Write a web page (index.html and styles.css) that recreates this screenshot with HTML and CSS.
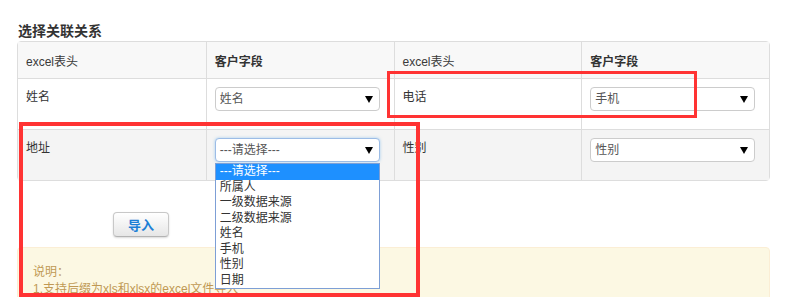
FILE: index.html
```html
<!DOCTYPE html>
<html lang="zh-CN">
<head>
  <meta charset="UTF-8">
  <title>选择关联关系</title>
  <link rel="stylesheet" href="styles.css">
</head>
<body>
  <div class="page">
    <h3 class="title">选择关联关系</h3>

    <table class="map-table">
      <thead>
        <tr>
          <th class="col-excel">excel表头</th>
          <th>客户字段</th>
          <th class="col-excel">excel表头</th>
          <th>客户字段</th>
        </tr>
      </thead>
      <tbody>
        <tr>
          <td>姓名</td>
          <td><div class="select"><span>姓名</span><i class="caret"></i></div></td>
          <td>电话</td>
          <td><div class="select"><span>手机</span><i class="caret"></i></div></td>
        </tr>
        <tr class="row-alt">
          <td>地址</td>
          <td>
            <div class="select focused">
              <span>---请选择---</span><i class="caret"></i>
              <ul class="options">
                <li class="active">---请选择---</li>
                <li>所属人</li>
                <li>一级数据来源</li>
                <li>二级数据来源</li>
                <li>姓名</li>
                <li>手机</li>
                <li>性别</li>
                <li>日期</li>
              </ul>
            </div>
          </td>
          <td>性别</td>
          <td><div class="select"><span>性别</span><i class="caret"></i></div></td>
        </tr>
      </tbody>
    </table>

    <div class="actions">
      <button class="btn">导入</button>
    </div>

    <div class="alert">
      <div>说明：</div>
      <div>1.支持后缀为xls和xlsx的excel文件导入</div>
    </div>

    <!-- annotation boxes -->
    <div class="mark mark-phone"></div>
    <div class="mark mark-address"></div>
  </div>
</body>
</html>
```

FILE: styles.css
```css
body {
  margin: 0;
  background: #fff;
  color: #333;
  font-family: "Liberation Sans", "Noto Sans CJK SC", sans-serif;
  font-size: 12px;
  line-height: 20px;
}

.page {
  position: relative;
  width: 753px;
  padding-left: 17px;
  height: 297px;
  overflow: hidden;
}

.title {
  margin: 21px 0 0 1px;
  font-size: 14px;
  line-height: 20px;
  font-weight: bold;
  color: #333;
}

/* mapping table */
.map-table {
  width: 753px;
  table-layout: fixed;
  border-collapse: separate;
  border-spacing: 0;
  border: 1px solid #ddd;
  border-radius: 4px;
}

.map-table th,
.map-table td {
  padding: 8px;
  text-align: left;
  vertical-align: top;
  border-left: 1px solid #ddd;
  border-top: 1px solid #ddd;
}

.map-table th:first-child,
.map-table td:first-child {
  border-left: none;
}

.map-table thead th {
  padding: 10px 8px 6px;
  border-top: none;
  background: #f8f8f8;
  font-weight: bold;
  color: #333;
}

.map-table thead th.col-excel {
  font-weight: normal;
  color: #3a3a3a;
}

.map-table .row-alt td {
  background: #f4f4f4;
}

/* fake select */
.select {
  position: relative;
  box-sizing: border-box;
  width: 165px;
  height: 24px;
  margin-bottom: 10px;
  padding: 0 4px;
  background: #fff;
  border: 1px solid #ccc;
  border-radius: 4px;
  color: #555;
  line-height: 22px;
}

.select.focused {
  border-color: #9cbce6;
  box-shadow: 0 0 3px rgba(82, 168, 236, 0.5);
}

.caret {
  position: absolute;
  right: 6px;
  top: 8px;
  width: 0;
  height: 0;
  border-left: 4px solid transparent;
  border-right: 4px solid transparent;
  border-top: 7px solid #000;
}

.options {
  position: absolute;
  left: -1px;
  top: 24px;
  z-index: 5;
  width: 165px;
  margin: 0;
  padding: 0;
  list-style: none;
  background: #fff;
  border: 1px solid #7d9fd6;
  box-sizing: border-box;
  color: #333;
}

.options li {
  height: 15.5px;
  line-height: 15px;
  padding-left: 4px;
}

.options li.active {
  background: #1e90ff;
  color: #fff;
}

/* import button */
.actions {
  padding: 31px 0 0 96px;
  height: 35px;
}

.btn {
  width: 56px;
  height: 25px;
  padding: 0;
  font-family: inherit;
  font-size: 13px;
  font-weight: bold;
  color: #1c7fd6;
  background: linear-gradient(to bottom, #ffffff, #e6e6e6);
  border: 1px solid #c8c8c8;
  border-bottom-color: #b3b3b3;
  border-radius: 4px;
  box-shadow: 0 1px 2px rgba(0, 0, 0, 0.15);
}

/* notice */
.alert {
  box-sizing: border-box;
  width: 753px;
  padding: 16px 15px 10px;
  background: #fcf8e3;
  border: 1px solid #fbeed5;
  border-radius: 4px;
  color: #c09853;
  line-height: 17px;
}

/* red annotation boxes */
.mark {
  position: absolute;
  box-sizing: border-box;
  border: 3px solid #f33;
  z-index: 10;
}

.mark-phone {
  left: 387px;
  top: 71px;
  width: 310px;
  height: 47px;
}

.mark-address {
  left: 19px;
  top: 122px;
  width: 401px;
  height: 175px;
  border-width: 4px;
}
```
